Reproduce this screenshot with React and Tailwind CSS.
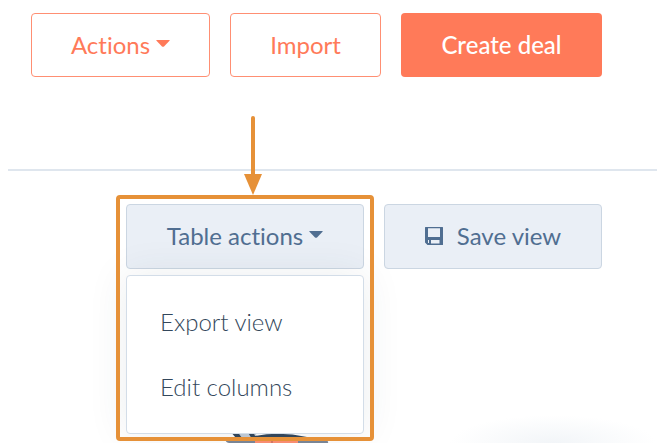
const menuItems = ['Export view', 'Edit columns']

function Caret() {
  return (
    <svg viewBox="0 0 14 8" className="mb-0.5 h-2 w-[14px] shrink-0" fill="currentColor" aria-hidden="true">
      <path d="M0.6 0H13.4Q14 0.2 13.5 0.8L8 6.4Q7 7.2 6 6.4L0.5 0.8Q0 0.2 0.6 0Z" />
    </svg>
  )
}

function SaveIcon() {
  return (
    <svg viewBox="0 0 18 18" className="h-[18px] w-[18px] shrink-0" fill="currentColor" aria-hidden="true">
      <path
        fillRule="evenodd"
        d="M0.5 0H17.5Q18 0 18 0.5V17.5Q18 18 17.5 18H2.5L0 15.5V0.5Q0 0 0.5 0ZM3 1.2V10H15V1.2ZM6 13V16.6H14.5V13ZM3 13V16H4V13Z"
      />
    </svg>
  )
}

function Arrow() {
  return (
    <svg
      viewBox="0 0 18 80"
      className="pointer-events-none absolute bottom-full left-[53%] mb-1 h-20 w-[18px] -translate-x-1/2"
      aria-hidden="true"
    >
      <path d="M9 3V62" stroke="#e69138" strokeWidth="4" strokeLinecap="round" />
      <path d="M0 59H18L9 80Z" fill="#e69138" />
    </svg>
  )
}

function Illustration() {
  return (
    <svg viewBox="0 0 106 12" className="absolute bottom-0 left-[98px] h-3 w-[106px]" aria-hidden="true">
      <path d="M6 0H30L34 7H12Z" fill="#c3cdd8" />
      <path d="M6 0H13L18 7H12Z" fill="#33475b" />
      <path d="M23 0H29L31 5Q56 0 83 6V8H28Z" fill="#33475b" />
      <path d="M2 9H31V12H5Q1 11 2 9Z" fill="#7c8798" />
      <path d="M31 9H74V12H31Z" fill="#ff8f73" />
      <path d="M47 9H49V12H47Z" fill="#d97862" />
      <path d="M74 9H101Q105 10 104 12H74Z" fill="#7c8798" />
    </svg>
  )
}

export default function App() {
  return (
    <main className="relative overflow-hidden bg-white pb-[9px] font-[Lato,sans-serif] text-[24px] leading-8 [font-variant-ligatures:none]">
      <header className="mx-2 flex justify-end gap-5 border-b-2 border-[#dfe6ee] pt-[13px] pr-[55px] pb-[92px] pl-5">
        <button
          type="button"
          className="flex h-16 w-[179px] items-center justify-center gap-1.5 rounded border border-[#ff8f73] text-[#ff7a59]"
        >
          Actions
          <Caret />
        </button>
        <button
          type="button"
          className="h-16 w-[151px] rounded border border-[#ff8f73] text-[#ff7a59]"
        >
          Import
        </button>
        <button type="button" className="h-16 w-[201px] rounded bg-[#ff7a59] font-medium text-white">
          Create deal
        </button>
      </header>

      <div
        className="absolute right-2 bottom-0 h-7 w-[208px] bg-[radial-gradient(ellipse_at_bottom,#f2f5f8,#ffffff_70%)]"
        aria-hidden="true"
      />

      <section className="flex items-start justify-end gap-5 pt-[33px] pr-[63px] pl-5">
        <div className="relative w-[238px]">
          <button
            type="button"
            aria-haspopup="menu"
            aria-expanded="true"
            className="flex h-[65px] w-full items-center justify-center gap-1.5 rounded border border-[#cbd6e2] bg-[#eaeff6] pb-0.5 text-[#506e91]"
          >
            Table actions
            <Caret />
          </button>
          <ul
            role="menu"
            className="relative z-10 mt-1.5 rounded border border-[#d3dde8] bg-white pt-[13px] pb-[14px] font-light text-[#33475b] shadow-[0_0_40px_rgba(45,62,80,0.09)]"
          >
            {menuItems.map((item) => (
              <li key={item} role="none">
                <button type="button" role="menuitem" className="h-[65px] w-full px-[33px] text-left">
                  {item}
                </button>
              </li>
            ))}
          </ul>
          <div className="absolute inset-x-0 -bottom-[9px] h-3" aria-hidden="true">
            <Illustration />
          </div>
          <div
            className="pointer-events-none absolute -inset-x-[10px] -top-[9px] -bottom-[7px] z-20 rounded-sm border-4 border-[#e69138]"
            aria-hidden="true"
          >
            <Arrow />
          </div>
        </div>

        <button
          type="button"
          className="flex h-[65px] w-[218px] items-center justify-center gap-[14px] rounded border border-[#cbd6e2] bg-[#eaeff6] pb-0.5 text-[#506e91]"
        >
          <SaveIcon />
          Save view
        </button>
      </section>
    </main>
  )
}
